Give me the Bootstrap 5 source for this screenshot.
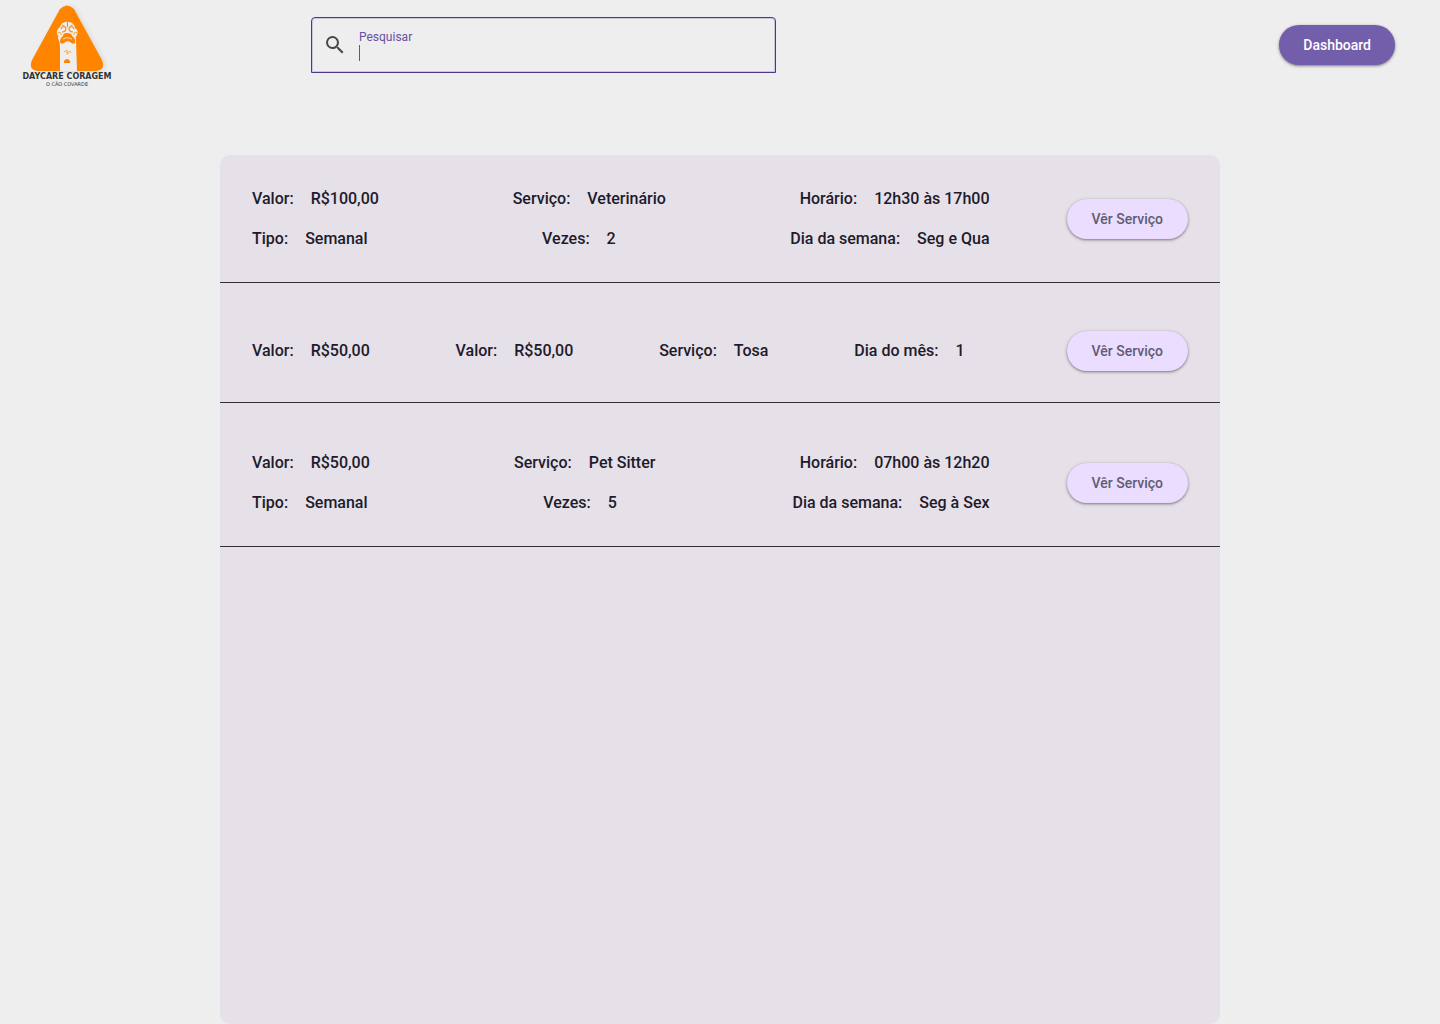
<!DOCTYPE html>
<html lang="pt-BR">
<head>
<meta charset="utf-8">
<meta name="viewport" content="width=device-width, initial-scale=1">
<title>Daycare Coragem</title>
<link href="https://cdn.jsdelivr.net/npm/bootstrap@5.3.0/dist/css/bootstrap.min.css" rel="stylesheet">
<style>
  body { background: #eee; color: #1d1b2b; font-family: Roboto, sans-serif; }
  .topbar { height: 90px; padding: 0 45px 0 21px; margin-bottom: 65px; }
  .brand { width: 92px; color: #333; font-family: "DejaVu Sans", sans-serif; white-space: nowrap; }
  .brand-name { font-size: 8px; line-height: 8px; font-weight: 700; }
  .brand-tag { font-size: 5px; line-height: 6px; }
  .search { width: 465px; height: 56px; margin-left: 198px; padding-left: 11px; gap: 12px;
    border: 1px solid #4f378b; border-radius: 4px 4px 0 0; box-shadow: inset 0 0 0 1px #cdc3de; }
  .search label { color: #6750a4; font-size: 12px; line-height: 16px; }
  .caret { width: 1px; height: 16px; background: #6750a4; }
  .search input { height: 16px; font-size: 16px; line-height: 16px; outline: 0; color: inherit; }
  .pill { height: 40px; padding: 0 24px; border-radius: 20px; border: 0; font-size: 14px; line-height: 20px; font-weight: 500;
    box-shadow: 0 1px 2px rgba(0,0,0,.3), 0 1px 3px 1px rgba(0,0,0,.15); }
  .pill-main, .pill-main:hover { background: #735eab; color: #fff; }
  .pill-soft, .pill-soft:hover { background: #eaddff; color: #625b71; padding: 0 25px; }
  .panel { width: 100%; max-width: 1000px; background: #e6e0e9; border-radius: 10px; }
  .entry { padding: 48px 32px 31px; border-bottom: 1px solid #322f35; gap: 77px; }
  .entry:first-child { padding-top: 32px; }
  .entry-single { gap: 102px; }
  .facts { gap: 16px; font-size: 16px; line-height: 24px; font-weight: 500; }
  .facts dl, .facts dt { font-weight: 500; }
  .facts dl > div { gap: 17px; }
</style>
</head>
<body class="min-vh-100 d-flex flex-column">
<header class="topbar d-flex align-items-center flex-shrink-0">
  <a href="#" class="brand d-flex flex-column align-items-center text-decoration-none" aria-label="Daycare Coragem">
    <svg width="82" height="69" viewBox="0 0 82 69" aria-hidden="true">
      <defs><filter id="soft" x="-20%" y="-20%" width="140%" height="140%"><feDropShadow dx="2" dy="1" stdDeviation="2" flood-opacity=".1"/></filter></defs>
      <path filter="url(#soft)" fill="#ff8500" d="M34 5Q41-2 48 5L76 56Q80 66 70 67H12Q2 66 6 56Z"/>
      <path fill="#eee" d="M34 67V44Q34 38 32 34Q33 32 31 30Q30 26 34 23Q35 19 39 18Q42 17 46 19Q49 21 49 24Q53 27 51 31Q49 33 50 37L51 67Z"/>
      <g fill="none" stroke="#ff8500">
        <path stroke-width="1.100" d="M35 25Q37 21 40 24Q40 28 36 28M48 25Q46 21 43 24Q43 28 47 28M41.500 18V23"/>
        <path stroke-width=".8" d="M36 21L39 22M47 21L44 22M32 29Q35 27 35 31M51 29Q48 27 48 31"/>
      </g>
      <path fill="#ff8500" d="M37 32Q37 29 41 29Q46 29 46 32Q50 35 49 39Q47 41 44 38Q41 36 38 39Q35 41 34 38Q34 34 37 32Z"/>
      <path fill="none" stroke="#eee" stroke-width=".8" d="M37 35Q41 32 46 35"/>
      <path fill="none" stroke="#ff8500" stroke-width=".6" d="M38 48L41 46L41 49L44 47L45 49M40 50L43 49"/>
      <path fill="#ff8500" d="M38 59V57Q41 53 44 57V59Z"/>
    </svg>
    <span class="brand-name">DAYCARE CORAGEM</span>
    <span class="brand-tag">O CÃO COVARDE</span>
  </a>
  <form class="search d-flex align-items-center">
    <svg width="24" height="24" viewBox="0 0 24 24" fill="#49454f" aria-hidden="true"><path d="M15.5 14h-.79l-.28-.27A6.47 6.47 0 0 0 16 9.5 6.5 6.5 0 1 0 9.5 16c1.61 0 3.09-.59 4.23-1.57l.27.28v.79l5 4.99L20.49 19l-4.99-5zm-6 0C7.01 14 5 11.99 5 9.5S7.01 5 9.5 5 14 7.01 14 9.5 11.99 14 9.5 14z"/></svg>
    <div class="d-flex flex-column flex-grow-1">
      <label for="q">Pesquisar</label>
      <div class="d-flex align-items-center"><span class="caret"></span><input id="q" type="text" class="border-0 bg-transparent p-0 flex-grow-1"></div>
    </div>
  </form>
  <button type="button" class="btn pill pill-main ms-auto">Dashboard</button>
</header>
<main class="panel mx-auto flex-grow-1">
  <section class="entry d-flex align-items-center">
    <div class="facts d-flex flex-column flex-grow-1">
      <dl class="d-flex justify-content-between mb-0">
        <div class="d-flex"><dt>Valor:</dt><dd class="mb-0">R$100,00</dd></div>
        <div class="d-flex"><dt>Serviço:</dt><dd class="mb-0">Veterinário</dd></div>
        <div class="d-flex"><dt>Horário:</dt><dd class="mb-0">12h30 às 17h00</dd></div>
      </dl>
      <dl class="d-flex justify-content-between mb-0">
        <div class="d-flex"><dt>Tipo:</dt><dd class="mb-0">Semanal</dd></div>
        <div class="d-flex"><dt>Vezes:</dt><dd class="mb-0">2</dd></div>
        <div class="d-flex"><dt>Dia da semana:</dt><dd class="mb-0">Seg e Qua</dd></div>
      </dl>
    </div>
    <button type="button" class="btn pill pill-soft">Vêr Serviço</button>
  </section>
  <section class="entry entry-single d-flex align-items-center">
    <div class="facts d-flex flex-column flex-grow-1">
      <dl class="d-flex justify-content-between mb-0">
        <div class="d-flex"><dt>Valor:</dt><dd class="mb-0">R$50,00</dd></div>
        <div class="d-flex"><dt>Valor:</dt><dd class="mb-0">R$50,00</dd></div>
        <div class="d-flex"><dt>Serviço:</dt><dd class="mb-0">Tosa</dd></div>
        <div class="d-flex"><dt>Dia do mês:</dt><dd class="mb-0">1</dd></div>
      </dl>
    </div>
    <button type="button" class="btn pill pill-soft">Vêr Serviço</button>
  </section>
  <section class="entry d-flex align-items-center">
    <div class="facts d-flex flex-column flex-grow-1">
      <dl class="d-flex justify-content-between mb-0">
        <div class="d-flex"><dt>Valor:</dt><dd class="mb-0">R$50,00</dd></div>
        <div class="d-flex"><dt>Serviço:</dt><dd class="mb-0">Pet Sitter</dd></div>
        <div class="d-flex"><dt>Horário:</dt><dd class="mb-0">07h00 às 12h20</dd></div>
      </dl>
      <dl class="d-flex justify-content-between mb-0">
        <div class="d-flex"><dt>Tipo:</dt><dd class="mb-0">Semanal</dd></div>
        <div class="d-flex"><dt>Vezes:</dt><dd class="mb-0">5</dd></div>
        <div class="d-flex"><dt>Dia da semana:</dt><dd class="mb-0">Seg à Sex</dd></div>
      </dl>
    </div>
    <button type="button" class="btn pill pill-soft">Vêr Serviço</button>
  </section>
</main>
<script src="https://cdn.jsdelivr.net/npm/bootstrap@5.3.0/dist/js/bootstrap.bundle.min.js"></script>
</body>
</html>
